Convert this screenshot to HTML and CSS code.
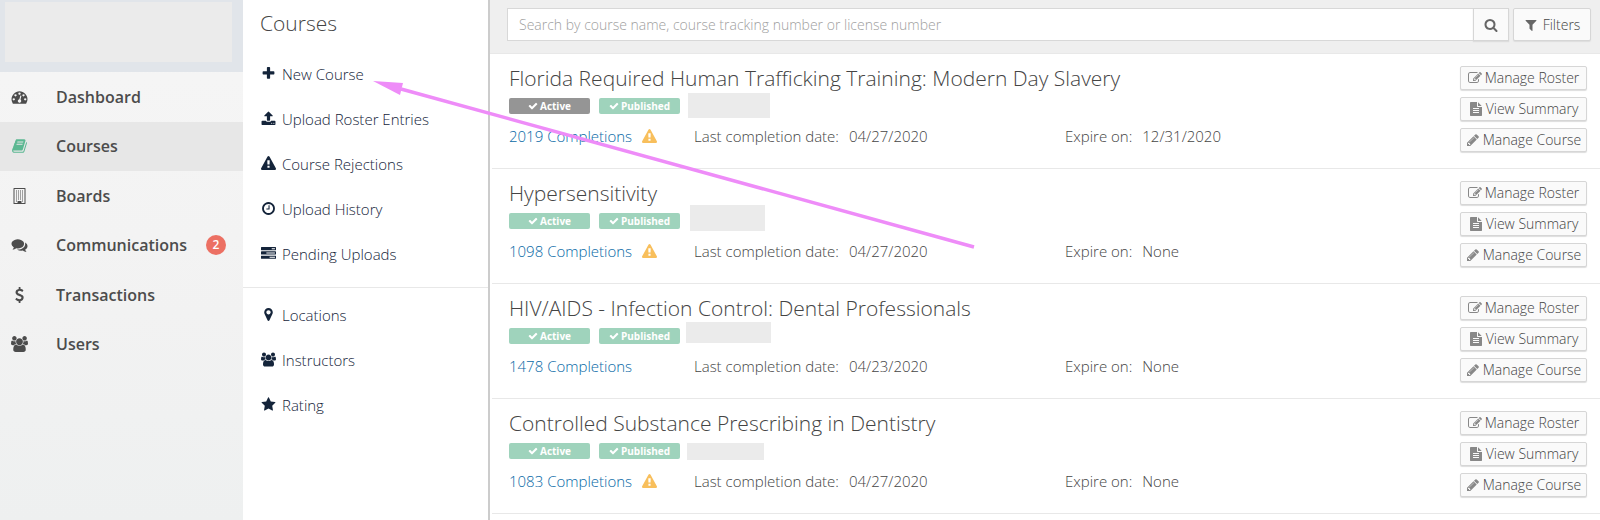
FILE: index.html
```html
<!DOCTYPE html>
<html lang="en">
<head>
<meta charset="utf-8">
<title>Courses</title>
<link rel="stylesheet" href="styles.css">
</head>
<body>
<svg class="sprite" aria-hidden="true">
  <symbol id="i-dash" viewBox="0 0 1792 1792"><path d="M384 1152q0-53-37.5-90.5t-90.5-37.5-90.5 37.5-37.5 90.5 37.5 90.5 90.5 37.5 90.5-37.5 37.5-90.5zm192-448q0-53-37.5-90.5t-90.5-37.5-90.5 37.5-37.5 90.5 37.5 90.5 90.5 37.5 90.5-37.5 37.5-90.5zm428 481l101-382q6-26-7.5-48.5t-38.5-29.5-48 6.5-30 39.5l-101 382q-60 5-107 43.5t-63 98.5q-20 77 20 146t117 89 146-20 89-117q16-60-6-117t-72-91zm660-33q0-53-37.5-90.5t-90.5-37.5-90.5 37.5-37.5 90.5 37.5 90.5 90.5 37.5 90.5-37.5 37.5-90.5zm-640-640q0-53-37.5-90.5t-90.5-37.5-90.5 37.5-37.5 90.5 37.5 90.5 90.5 37.5 90.5-37.5 37.5-90.5zm448 192q0-53-37.5-90.5t-90.5-37.5-90.5 37.5-37.5 90.5 37.5 90.5 90.5 37.5 90.5-37.5 37.5-90.5zm320 448q0 261-141 483-19 29-54 29h-1402q-35 0-54-29-141-221-141-483 0-182 71-348t191-286 286-191 348-71 348 71 286 191 191 286 71 348z"/></symbol>
  <symbol id="i-book" viewBox="0 0 1792 1792"><path d="M1703 478q40 57 18 129l-275 906q-19 64-76.5 107.5t-122.5 43.5h-923q-77 0-148.5-53.5t-99.5-131.5q-24-67-2-127 0-4 3-27t4-37q1-8-3-21.5t-3-19.5q2-11 8-21t16.5-23.5 16.5-23.5q23-38 45-91.5t30-91.5q3-10 .5-30t-.5-28q3-11 17-28t17-23q21-36 42-92t25-90q1-9-2.5-32t.5-28q4-13 22-30.5t22-22.5q19-26 42.5-84.5t27.5-96.5q1-8-3-25.5t-2-26.5q2-8 9-18t18-23 17-21q8-12 16.5-30.5t15-35 16-36 19.5-32 26.5-23.5 36-11.5 47.5 5.5l-1 3q38-9 51-9h761q74 0 114 56t18 130l-274 906q-36 119-71.5 153.5t-128.5 34.5h-869q-27 0-38 15-11 16-1 43 24 70 144 70h923q29 0 56-15.5t35-41.5l300-987q7-22 5-57 38 15 59 43zm-1064 2q-4 13 2 22.5t20 9.5h608q13 0 25.5-9.5t16.5-22.5l21-64q4-13-2-22.5t-20-9.5h-608q-13 0-25.5 9.5t-16.5 22.5zm-83 256q-4 13 2 22.5t20 9.5h608q13 0 25.5-9.5t16.5-22.5l21-64q4-13-2-22.5t-20-9.5h-608q-13 0-25.5 9.5t-16.5 22.5z"/></symbol>
  <symbol id="i-building" viewBox="0 0 14 16"><path fill-rule="evenodd" d="M1.500 0h11q.5 0 .5.500v15q0 .5-.5.500h-11q-.5 0-.5-.5v-15q0-.5.5-.5zM2 1v14h3v-1.500q0-.5.5-.5h3q.5 0 .5.500v1.500h3v-14zM3.500 2.500h1v1h-1zm2 0h1v1h-1zm2 0h1v1h-1zm2 0h1v1h-1zM3.500 4.500h1v1h-1zm2 0h1v1h-1zm2 0h1v1h-1zm2 0h1v1h-1zM3.500 6.500h1v1h-1zm2 0h1v1h-1zm2 0h1v1h-1zm2 0h1v1h-1zM3.500 8.500h1v1h-1zm2 0h1v1h-1zm2 0h1v1h-1zm2 0h1v1h-1zM3.500 10.500h1v1h-1zm2 0h1v1h-1zm2 0h1v1h-1zm2 0h1v1h-1zM3.500 12.500h1v1h-1zm6 0h1v1h-1z"/></symbol>
  <symbol id="i-comments" viewBox="0 0 1792 1792"><path d="M1408 768q0 139-94 257t-256.500 186.500-353.500 68.500q-86 0-176-16-124 88-278 128-36 9-86 16h-3q-11 0-20.500-8t-11.500-21q-1-3-1-6.500t.5-6.500 2-6l2.500-5 3.500-5.500 4-5 4.500-5 4-4.500q5-6 23-25t26-29.500 22.500-29 25-38.500 20.500-44q-124-72-195-177t-71-224q0-139 94-257t256.500-186.500 353.500-68.500 353.500 68.500 256.500 186.500 94 257zm384 256q0 120-71 224.500t-195 176.500q10 24 20.500 44t25 38.500 22.500 29 26 29.500 23 25q1 1 4 4.500t4.500 5 4 5 3.500 5.500l2.500 5 2 6 .5 6.500-1 6.500q-3 14-13 22t-22 7q-50-7-86-16-154-40-278-128-90 16-176 16-271 0-472-132 58 4 88 4 161 0 309-45t264-129q125-92 192-212t67-254q0-77-23-152 129 71 204 178t75 230z"/></symbol>
  <symbol id="i-usd" viewBox="0 0 1792 1792"><path d="M1362 1185q0 153-99.500 263.500t-258.500 136.500v175q0 14-9 23t-23 9h-135q-13 0-22.500-9.500t-9.500-22.500v-175q-66-9-127.500-31t-101.500-44.500-74-48-46.500-37.500-17.500-18q-17-21-2-41l103-135q7-10 23-12 15-2 24 9l2 2q113 99 243 125 37 8 74 8 81 0 142.500-43t61.500-122q0-28-15-53t-33.500-42-58.500-37.500-66-32-80-32.500q-39-16-61.500-25t-61.500-26.500-62.500-31-56.500-35.500-53.500-42.500-43.500-49-35.500-58-21-66.500-8.500-78q0-138 98-242t255-134v-180q0-13 9.500-22.500t22.500-9.500h135q14 0 23 9t9 23v176q57 6 110.500 23t87 33.500 63.500 37.500 39 29 15 14q17 18 5 38l-81 146q-8 15-23 16-14 3-27-7-3-3-14.500-12t-39-26.500-58.500-32-74.500-26-85.500-11.500q-95 0-155 43t-60 111q0 26 8.500 48t29.500 41.500 39.500 33 56 31 60.500 27 70 27.500q53 20 81 31.500t76 35 75.500 42.500 62 50 53 63.500 31.500 76.500 13 94z"/></symbol>
  <symbol id="i-users" viewBox="0 0 1920 1792"><path d="M593 896q-162 5-265 128h-134q-82 0-138-40.500t-56-118.500q0-353 124-353 6 0 43.500 21t97.500 42.500 119 21.500q67 0 133-23-5 37-5 66 0 139 81 256zm1071 637q0 120-73 189.500t-194 69.500h-874q-121 0-194-69.500t-73-189.500q0-53 3.500-103.500t14-109 26.500-108.500 43-97.500 62-81 85.500-53.500 111.500-20q10 0 43 21.500t73 48 107 48 135 21.500 135-21.500 107-48 73-48 43-21.500q61 0 111.500 20t85.500 53.500 62 81 43 97.500 26.500 108.500 14 109 3.500 103.500zm-1024-1277q0 106-75 181t-181 75-181-75-75-181 75-181 181-75 181 75 75 181zm704 384q0 159-112.500 271.500t-271.500 112.500-271.500-112.500-112.500-271.500 112.500-271.500 271.500-112.500 271.500 112.500 112.500 271.500zm576 225q0 78-56 118.500t-138 40.500h-134q-103-123-265-128 81-117 81-256 0-29-5-66 66 23 133 23 59 0 119-21.500t97.500-42.500 43.500-21q124 0 124 353zm-128-609q0 106-75 181t-181 75-181-75-75-181 75-181 181-75 181 75 75 181z"/></symbol>
  <symbol id="i-plus" viewBox="0 0 1792 1792"><path d="M1600 736v192q0 40-28 68t-68 28h-416v416q0 40-28 68t-68 28h-192q-40 0-68-28t-28-68v-416h-416q-40 0-68-28t-28-68v-192q0-40 28-68t68-28h416v-416q0-40 28-68t68-28h192q40 0 68 28t28 68v416h416q40 0 68 28t28 68z"/></symbol>
  <symbol id="i-upload" viewBox="0 0 1792 1792"><path d="M1344 1472q0-26-19-45t-45-19-45 19-19 45 19 45 45 19 45-19 19-45zm256 0q0-26-19-45t-45-19-45 19-19 45 19 45 45 19 45-19 19-45zm128-224v320q0 40-28 68t-68 28h-1472q-40 0-68-28t-28-68v-320q0-40 28-68t68-28h427q21 56 70.500 92t110.500 36h256q61 0 110.500-36t70.500-92h427q40 0 68 28t28 68zm-325-648q-17 40-59 40h-256v448q0 26-19 45t-45 19h-256q-26 0-45-19t-19-45v-448h-256q-42 0-59-40-17-39 14-69l448-448q18-19 45-19t45 19l448 448q31 30 14 69z"/></symbol>
  <symbol id="i-warn" viewBox="0 0 1792 1792"><path d="M1024 1375v-190q0-14-9.500-23.500t-22.500-9.500h-192q-13 0-22.500 9.500t-9.500 23.500v190q0 14 9.500 23.500t22.500 9.500h192q13 0 22.500-9.500t9.500-23.500zm-2-374l18-459q0-12-10-19-13-11-24-11h-220q-11 0-24 11-10 7-10 21l17 457q0 10 10 16.500t24 6.500h185q14 0 23.500-6.500t10.500-16.500zm-14-934l768 1408q35 63-2 126-17 29-46.500 46t-63.500 17h-1536q-34 0-63.500-17t-46.500-46q-37-63-2-126l768-1408q17-31 47-49t65-18 65 18 47 49z"/></symbol>
  <symbol id="i-clock" viewBox="0 0 1792 1792"><path d="M1024 544v448q0 14-9 23t-23 9h-320q-14 0-23-9t-9-23v-64q0-14 9-23t23-9h224v-352q0-14 9-23t23-9h64q14 0 23 9t9 23zm416 352q0-148-73-273t-198-198-273-73-273 73-198 198-73 273 73 273 198 198 273 73 273-73 198-198 73-273zm224 0q0 209-103 385.500t-279.500 279.500-385.500 103-385.500-103-279.500-279.500-103-385.500 103-385.500 279.500-279.500 385.500-103 385.500 103 279.500 279.500 103 385.500z"/></symbol>
  <symbol id="i-tasks" viewBox="0 0 1792 1792"><path d="M1024 1408h640v-128h-640v128zm-384-512h1024v-128h-1024v128zm640-512h384v-128h-384v128zm512 832v256q0 26-19 45t-45 19h-1664q-26 0-45-19t-19-45v-256q0-26 19-45t45-19h1664q26 0 45 19t19 45zm0-512v256q0 26-19 45t-45 19h-1664q-26 0-45-19t-19-45v-256q0-26 19-45t45-19h1664q26 0 45 19t19 45zm0-512v256q0 26-19 45t-45 19h-1664q-26 0-45-19t-19-45v-256q0-26 19-45t45-19h1664q26 0 45 19t19 45z"/></symbol>
  <symbol id="i-marker" viewBox="0 0 1792 1792"><path d="M1152 640q0-106-75-181t-181-75-181 75-75 181 75 181 181 75 181-75 75-181zm256 0q0 109-33 179l-364 774q-16 33-47.500 52t-67.500 19-67.500-19-46.500-52l-365-774q-33-70-33-179 0-212 150-362t362-150 362 150 150 362z"/></symbol>
  <symbol id="i-star" viewBox="0 0 1792 1792"><path d="M1728 647q0 22-26 48l-363 354 86 500q1 7 1 20 0 21-10.500 35.500t-30.500 14.500q-19 0-40-12l-449-236-449 236q-22 12-40 12-21 0-31.500-14.500t-10.500-35.500q0-6 2-20l86-500-364-354q-25-27-25-48 0-37 56-46l502-73 225-455q19-41 49-41t49 41l225 455 502 73q56 9 56 46z"/></symbol>
  <symbol id="i-search" viewBox="0 0 1792 1792"><path d="M1216 832q0-185-131.500-316.500t-316.500-131.500-316.500 131.500-131.500 316.500 131.500 316.500 316.500 131.500 316.500-131.500 131.500-316.500zm512 832q0 52-38 90t-90 38q-54 0-90-38l-343-342q-179 124-399 124-143 0-273.500-55.500t-225-150-150-225-55.500-273.500 55.500-273.500 150-225 225-150 273.500-55.500 273.500 55.500 225 150 150 225 55.500 273.500q0 220-124 399l343 343q37 37 37 90z"/></symbol>
  <symbol id="i-filter" viewBox="0 0 1792 1792"><path d="M1595 295q17 41-14 70l-493 493v742q0 42-39 59-13 5-25 5-27 0-45-19l-256-256q-19-19-19-45v-486l-493-493q-31-29-14-70 17-39 59-39h1280q42 0 59 39z"/></symbol>
  <symbol id="i-check" viewBox="0 0 1792 1792"><path d="M1671 566q0 40-28 68l-724 724-136 136q-28 28-68 28t-68-28l-136-136-362-362q-28-28-28-68t28-68l136-136q28-28 68-28t68 28l294 295 656-657q28-28 68-28t68 28l136 136q28 28 28 68z"/></symbol>
  <symbol id="i-pencil" viewBox="0 0 1792 1792"><path d="M491 1536l91-91-235-235-91 91v107h128v128h107zm523-928q0-22-22-22-10 0-17 7l-542 542q-7 7-7 17 0 22 22 22 10 0 17-7l542-542q7-7 7-17zm-54-192l416 416-832 832h-416v-416zm683 96q0 53-37 90l-166 166-416-416 166-165q36-38 90-38 53 0 91 38l235 234q37 39 37 91z"/></symbol>
  <symbol id="i-edit" viewBox="0 0 1792 1792"><path d="M888 1184l116-116-152-152-116 116v56h96v96h56zm440-720q-16-16-33 1l-350 350q-17 17-1 33t33-1l350-350q17-17 1-33zm80 594v190q0 119-84.500 203.500t-203.500 84.500h-832q-119 0-203.500-84.500t-84.500-203.500v-832q0-119 84.500-203.500t203.500-84.500h832q63 0 117 25 15 7 18 23 3 17-9 29l-49 49q-14 14-32 8-23-6-45-6h-832q-66 0-113 47t-47 113v832q0 66 47 113t113 47h832q66 0 113-47t47-113v-126q0-13 9-22l64-64q15-15 35-7t20 29zm-96-738l288 288-672 672h-288v-288zm444 132l-92 92-288-288 92-92q28-28 68-28t68 28l152 152q28 28 28 68t-28 68z"/></symbol>
  <symbol id="i-file" viewBox="0 0 1792 1792"><path d="M1596 476q14 14 28 36h-472v-472q22 14 36 28zm-476 164h544v1056q0 40-28 68t-68 28h-1344q-40 0-68-28t-28-68v-1600q0-40 28-68t68-28h800v544q0 40 28 68t68 28zm160 736v-64q0-14-9-23t-23-9h-704q-14 0-23 9t-9 23v64q0 14 9 23t23 9h704q14 0 23-9t9-23zm0-256v-64q0-14-9-23t-23-9h-704q-14 0-23 9t-9 23v64q0 14 9 23t23 9h704q14 0 23-9t9-23zm0-256v-64q0-14-9-23t-23-9h-704q-14 0-23 9t-9 23v64q0 14 9 23t23 9h704q14 0 23-9t9-23z"/></symbol>
</svg>

<div class="app">
  <aside class="sidebar">
    <div class="brand"><div class="brand-logo"></div></div>
    <nav class="nav" aria-label="Main">
      <a class="nav-item" href="#"><svg class="icon"><use href="#i-dash"/></svg><span>Dashboard</span></a>
      <a class="nav-item is-active" href="#"><svg class="icon"><use href="#i-book"/></svg><span>Courses</span></a>
      <a class="nav-item" href="#"><svg class="icon"><use href="#i-building"/></svg><span>Boards</span></a>
      <a class="nav-item" href="#"><svg class="icon"><use href="#i-comments"/></svg><span>Communications</span><span class="count">2</span></a>
      <a class="nav-item" href="#"><svg class="icon"><use href="#i-usd"/></svg><span>Transactions</span></a>
      <a class="nav-item" href="#"><svg class="icon"><use href="#i-users"/></svg><span>Users</span></a>
    </nav>
  </aside>

  <section class="submenu">
    <h1 class="submenu-title">Courses</h1>
    <nav class="submenu-group" aria-label="Course actions">
      <a class="sub-item" href="#"><svg class="icon"><use href="#i-plus"/></svg>New Course</a>
      <a class="sub-item" href="#"><svg class="icon"><use href="#i-upload"/></svg>Upload Roster Entries</a>
      <a class="sub-item" href="#"><svg class="icon"><use href="#i-warn"/></svg>Course Rejections</a>
      <a class="sub-item" href="#"><svg class="icon"><use href="#i-clock"/></svg>Upload History</a>
      <a class="sub-item" href="#"><svg class="icon"><use href="#i-tasks"/></svg>Pending Uploads</a>
    </nav>
    <nav class="submenu-group" aria-label="Course settings">
      <a class="sub-item" href="#"><svg class="icon"><use href="#i-marker"/></svg>Locations</a>
      <a class="sub-item" href="#"><svg class="icon"><use href="#i-users"/></svg>Instructors</a>
      <a class="sub-item" href="#"><svg class="icon"><use href="#i-star"/></svg>Rating</a>
    </nav>
  </section>

  <main class="main">
    <form class="toolbar">
      <div class="search">
        <input class="search-input" type="text" aria-label="Search courses" placeholder="Search by course name, course tracking number or license number">
        <button class="btn search-btn" type="button" aria-label="Search"><svg class="icon"><use href="#i-search"/></svg></button>
      </div>
      <button class="btn filter-btn" type="button"><svg class="icon"><use href="#i-filter"/></svg>Filters</button>
    </form>

    <div class="list">
      <article class="course">
        <div class="course-body">
          <h2 class="course-title">Florida Required Human Trafficking Training: Modern Day Slavery</h2>
          <div class="badges">
            <span class="badge badge-gray"><svg class="icon"><use href="#i-check"/></svg>Active</span>
            <span class="badge"><svg class="icon"><use href="#i-check"/></svg>Published</span>
            <span class="mask mask-a"></span>
          </div>
          <div class="facts">
            <div class="fact"><a class="link" href="#">2019 Completions</a><svg class="icon warn"><use href="#i-warn"/></svg></div>
            <div class="fact"><span>Last completion date:</span><span>04/27/2020</span></div>
            <div class="fact"><span>Expire on:</span><span>12/31/2020</span></div>
          </div>
        </div>
        <div class="actions">
          <button class="btn action" type="button"><svg class="icon"><use href="#i-edit"/></svg>Manage Roster</button>
          <button class="btn action" type="button"><svg class="icon"><use href="#i-file"/></svg>View Summary</button>
          <button class="btn action" type="button"><svg class="icon"><use href="#i-pencil"/></svg>Manage Course</button>
        </div>
      </article>

      <article class="course">
        <div class="course-body">
          <h2 class="course-title">Hypersensitivity</h2>
          <div class="badges">
            <span class="badge"><svg class="icon"><use href="#i-check"/></svg>Active</span>
            <span class="badge"><svg class="icon"><use href="#i-check"/></svg>Published</span>
            <span class="mask mask-b"></span>
          </div>
          <div class="facts">
            <div class="fact"><a class="link" href="#">1098 Completions</a><svg class="icon warn"><use href="#i-warn"/></svg></div>
            <div class="fact"><span>Last completion date:</span><span>04/27/2020</span></div>
            <div class="fact"><span>Expire on:</span><span>None</span></div>
          </div>
        </div>
        <div class="actions">
          <button class="btn action" type="button"><svg class="icon"><use href="#i-edit"/></svg>Manage Roster</button>
          <button class="btn action" type="button"><svg class="icon"><use href="#i-file"/></svg>View Summary</button>
          <button class="btn action" type="button"><svg class="icon"><use href="#i-pencil"/></svg>Manage Course</button>
        </div>
      </article>

      <article class="course">
        <div class="course-body">
          <h2 class="course-title">HIV/AIDS - Infection Control: Dental Professionals</h2>
          <div class="badges">
            <span class="badge"><svg class="icon"><use href="#i-check"/></svg>Active</span>
            <span class="badge"><svg class="icon"><use href="#i-check"/></svg>Published</span>
            <span class="mask mask-c"></span>
          </div>
          <div class="facts">
            <div class="fact"><a class="link" href="#">1478 Completions</a></div>
            <div class="fact"><span>Last completion date:</span><span>04/23/2020</span></div>
            <div class="fact"><span>Expire on:</span><span>None</span></div>
          </div>
        </div>
        <div class="actions">
          <button class="btn action" type="button"><svg class="icon"><use href="#i-edit"/></svg>Manage Roster</button>
          <button class="btn action" type="button"><svg class="icon"><use href="#i-file"/></svg>View Summary</button>
          <button class="btn action" type="button"><svg class="icon"><use href="#i-pencil"/></svg>Manage Course</button>
        </div>
      </article>

      <article class="course">
        <div class="course-body">
          <h2 class="course-title">Controlled Substance Prescribing in Dentistry</h2>
          <div class="badges">
            <span class="badge"><svg class="icon"><use href="#i-check"/></svg>Active</span>
            <span class="badge"><svg class="icon"><use href="#i-check"/></svg>Published</span>
            <span class="mask mask-d"></span>
          </div>
          <div class="facts">
            <div class="fact"><a class="link" href="#">1083 Completions</a><svg class="icon warn"><use href="#i-warn"/></svg></div>
            <div class="fact"><span>Last completion date:</span><span>04/27/2020</span></div>
            <div class="fact"><span>Expire on:</span><span>None</span></div>
          </div>
        </div>
        <div class="actions">
          <button class="btn action" type="button"><svg class="icon"><use href="#i-edit"/></svg>Manage Roster</button>
          <button class="btn action" type="button"><svg class="icon"><use href="#i-file"/></svg>View Summary</button>
          <button class="btn action" type="button"><svg class="icon"><use href="#i-pencil"/></svg>Manage Course</button>
        </div>
      </article>
    </div>
  </main>

  <svg class="pointer" viewBox="0 0 602 168" aria-hidden="true">
    <path d="M28 8L601 166" fill="none" stroke="#ee8cf8" stroke-width="3.500"/>
    <path d="M0 0L30 2L27 14Z" fill="#ee8cf8"/>
  </svg>
</div>
</body>
</html>
```
FILE: styles.css
```css
* {
  box-sizing: border-box;
}

body {
  margin: 0;
  background: #fff;
  color: #444;
  font-family: "Open Sans", "Noto Sans", sans-serif;
  font-size: 15px;
  font-weight: 300;
  line-height: 20px;
}

a {
  color: inherit;
  text-decoration: none;
}

h1,
h2 {
  margin: 0;
  font-weight: 300;
}

.sprite {
  display: none;
}

.icon {
  flex: none;
  width: 14px;
  height: 14px;
  fill: currentColor;
}

.app {
  position: relative;
  display: grid;
  grid-template-columns: 243px 247px 1fr;
  min-height: 100vh;
}

/* Main navigation */
.sidebar {
  background: linear-gradient(#f6f6f6, #f2f2f2 60%, #eef0f0);
}

.brand {
  height: 72px;
  padding: 2px 11px 10px 5px;
  background: #e1e5ea;
}

.brand-logo {
  height: 100%;
  background: #ebebeb;
}

.nav {
  display: grid;
  grid-auto-rows: 1fr;
  height: 297px;
}

.nav-item {
  display: flex;
  align-items: center;
  padding: 0 17px 0 11px;
  color: #4c4c4c;
  font-size: 16px;
  font-weight: 600;
}

.nav-item .icon {
  width: 17px;
  height: 16px;
  margin-right: 28px;
}

.nav-item.is-active {
  background: #e7e7e7;
}

.nav-item.is-active .icon {
  color: #5cb892;
}

.count {
  width: 20px;
  margin-left: auto;
  border-radius: 10px;
  background: #ec7063;
  color: #fff;
  font-size: 12px;
  text-align: center;
}

/* Section menu */
.submenu {
  border-right: 2px solid #ccc;
  color: #14243a;
}

.submenu-title {
  padding: 9px 17px 13px;
  color: #444;
  font-size: 21px;
  line-height: 28px;
}

.submenu-group {
  padding: 1px 0 11px;
}

.submenu-group + .submenu-group {
  padding-top: 4px;
  border-top: 1px solid #e8e8e8;
}

.sub-item {
  display: flex;
  align-items: center;
  gap: 6px;
  height: 45px;
  padding: 0 18px;
}

.sub-item .icon {
  width: 15px;
  height: 15px;
}

/* Search bar */
.toolbar {
  display: flex;
  gap: 4px;
  padding: 8px 9px 12px 17px;
  border-bottom: 1px solid #e8e8e8;
  background: #efefef;
}

.search {
  display: flex;
  flex: 1;
}

.search-input {
  flex: 1;
  min-width: 0;
  height: 33px;
  padding: 0 11px;
  border: 1px solid #d8d8d8;
  border-right: 0;
  background: #fff;
  color: #666;
  font: inherit;
  font-size: 14px;
}

.search-input::placeholder {
  color: #a0a0a0;
}

.btn {
  display: flex;
  align-items: center;
  justify-content: center;
  border: 1px solid #d6d6d6;
  border-radius: 2px;
  background: #fafafa;
  box-shadow: 0 1px 1px #ddd;
  color: #444;
  font: inherit;
  font-size: 14px;
}

.btn .icon {
  color: #666;
}

.search-btn {
  width: 36px;
  border-radius: 0;
}

.filter-btn {
  gap: 5px;
  width: 78px;
}

/* Course list */
.list {
  margin-left: 2px;
}

.course {
  display: flex;
  gap: 13px;
  padding: 12px 13px 16px 17px;
  border-bottom: 1px solid #e8e8e8;
}

.course-body {
  flex: 1;
}

.course-title {
  font-size: 21px;
  line-height: 24px;
}

.badges {
  display: flex;
  gap: 9px;
  height: 16px;
  margin: 8px 0 12px;
}

.badge {
  display: flex;
  align-items: center;
  justify-content: center;
  gap: 2px;
  width: 81px;
  border-radius: 2px;
  background: #9fd3bc;
  color: #fff;
  font-size: 10px;
  font-weight: 700;
  line-height: 16px;
}

.badge-gray {
  background: #959595;
}

.badge .icon {
  width: 10px;
  height: 10px;
}

.mask {
  background: #ebebeb;
}

.mask-a {
  width: 82px;
  height: 25px;
  margin: -5px 0 0 -1px;
}

.mask-b {
  width: 75px;
  height: 26px;
  margin: -8px 0 0 1px;
}

.mask-c {
  width: 85px;
  height: 21px;
  margin: -6px 0 0 -3px;
}

.mask-d {
  width: 77px;
  height: 17px;
  margin-left: -2px;
}

.facts {
  display: grid;
  grid-template-columns: 185fr 371fr 382fr;
}

.fact {
  display: flex;
  align-items: center;
  gap: 10px;
}

.link {
  color: #0869a6;
}

.warn {
  width: 15px;
  height: 15px;
  color: #f8bf5c;
}

.actions {
  display: grid;
  align-content: start;
  gap: 7px;
  width: 127px;
}

.action {
  gap: 3px;
  height: 24px;
  padding: 0;
}

.action .icon {
  color: #888;
}

/* Arrow drawn over the page, pointing at "New Course" */
.pointer {
  position: absolute;
  top: 81px;
  left: 373px;
  width: 602px;
  height: 168px;
  pointer-events: none;
}
```
